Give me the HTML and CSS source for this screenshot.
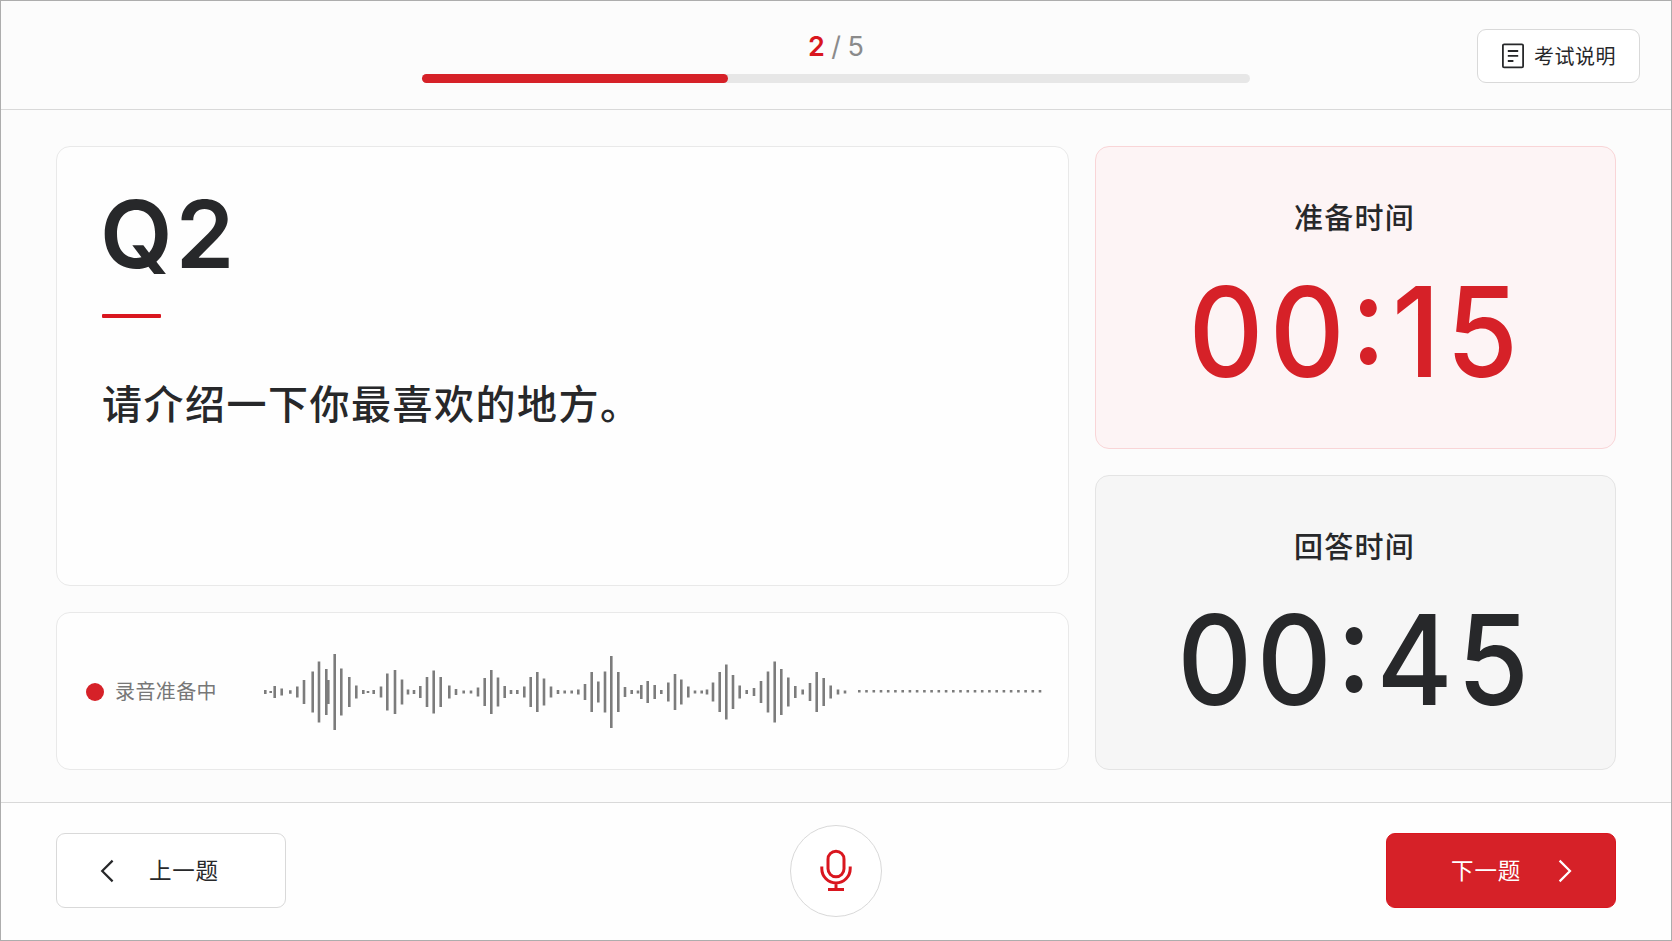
FILE: index.html
```html
<!doctype html>
<html lang="zh-CN">
  <head>
    <meta charset="utf-8">
    <title>口语考试</title>
    <link rel="stylesheet" href="styles.css">
  </head>
  <body>
    <div class="exam">
      <header class="topbar">
        <div class="progress">
          <div class="progress-count"><b>2</b> / 5</div>
          <div class="progress-track"><div class="progress-fill"></div></div>
        </div>
        <button class="btn btn-help" type="button">
          <svg width="24" height="26" viewBox="0 0 24 26" fill="none" stroke="currentColor" stroke-width="1.8">
            <rect x="1.9" y="1.4" width="20.2" height="23" rx="1.2"/>
            <path d="M6.8 8h10.4M6.8 12.9h10.4M6.8 18h5.6"/>
          </svg>
          <span>考试说明</span>
        </button>
      </header>

      <main class="content">
        <div class="column">
          <section class="card question">
            <h1>Q2</h1>
            <div class="rule"></div>
            <p>请介绍一下你最喜欢的地方。</p>
          </section>
          <section class="card recorder">
            <span class="rec-dot"></span>
            <span class="rec-label">录音准备中</span>
            <svg id="wave" class="wave" width="790" height="84" viewBox="260 -42 790 84"></svg>
          </section>
        </div>

        <div class="column">
          <section class="card timer timer-prep">
            <h2>准备时间</h2>
            <div class="clock">00:15</div>
          </section>
          <section class="card timer timer-answer">
            <h2>回答时间</h2>
            <div class="clock">00:45</div>
          </section>
        </div>
      </main>

      <footer class="bottombar">
        <button class="btn btn-nav btn-prev" type="button">
          <svg width="14" height="24" viewBox="0 0 14 24" fill="none" stroke="currentColor" stroke-width="2.2">
            <path d="M12.6 1.6 2.2 12l10.4 10.4"/>
          </svg>
          <span>上一题</span>
        </button>
        <button class="mic" type="button" aria-label="录音">
          <svg width="34" height="44" viewBox="0 0 34 44" fill="none" stroke="currentColor" stroke-width="3">
            <rect x="9" y="2.2" width="16" height="25.6" rx="8"/>
            <path d="M2.8 17.5v2.2a14.2 14.2 0 0 0 28.4 0v-2.2M17 34v6M9 40.5h16"/>
          </svg>
        </button>
        <button class="btn btn-nav btn-next" type="button">
          <span>下一题</span>
          <svg width="14" height="24" viewBox="0 0 14 24" fill="none" stroke="currentColor" stroke-width="2.2">
            <path d="M1.6 1.6 12 12 1.6 22.4"/>
          </svg>
        </button>
      </footer>
    </div>
    <script src="wave.js"></script>
  </body>
</html>
```
FILE: styles.css
```css
* {
  box-sizing: border-box;
}

body {
  margin: 0;
  font-family: Inter, "Noto Sans CJK SC", sans-serif;
  color: #27282a;
}

h1, h2, p {
  margin: 0;
}

.exam {
  display: flex;
  flex-direction: column;
  width: 1672px;
  height: 941px;
  border: 1px solid #adadad;
  background: #fcfcfc;
}

/* top bar */
.topbar {
  display: grid;
  grid-template-columns: 1fr 828px 1fr;
  height: 109px;
  padding: 0 31px;
  border-bottom: 1px solid #d9d9d9;
}

.progress {
  grid-column: 2;
  padding-top: 28px;
}

.progress-count {
  height: 36px;
  line-height: 36px;
  font-size: 27px;
  letter-spacing: 0.2px;
  word-spacing: -1.5px;
  text-align: center;
  color: #8b8b8b;
}

.progress-count b {
  font-weight: 600;
  color: #d9161f;
}

.progress-track {
  height: 9px;
  margin-top: 9px;
  border-radius: 5px;
  background: #e7e7e7;
}

.progress-fill {
  width: 37%;
  height: 100%;
  border-radius: 5px;
  background: #d62128;
}

.btn {
  display: flex;
  align-items: center;
  border: 1px solid #d9d9d9;
  border-radius: 9px;
  background: #fff;
  color: #27282a;
  font-family: inherit;
}

.btn-help {
  justify-self: end;
  gap: 9px;
  width: 163px;
  height: 54px;
  margin-top: 28px;
  padding: 0 0 1px 23px;
  font-size: 20px;
  letter-spacing: 0.5px;
}

/* cards */
.content {
  display: grid;
  grid-template-columns: 1013px 521px;
  column-gap: 26px;
  height: 692px;
  padding: 36px 55px 32px;
}

.column {
  display: flex;
  flex-direction: column;
  gap: 26px;
}

.card {
  border: 1px solid #e9e9e9;
  border-radius: 14px;
  background: #fefefe;
}

.question {
  height: 440px;
  padding: 32px 45px;
}

.question h1 {
  height: 110px;
  margin-left: -2px;
  line-height: 110px;
  font-size: 94px;
  font-weight: 600;
  letter-spacing: 3px;
}

.question .rule {
  width: 59px;
  height: 4px;
  margin-top: 25px;
  border-radius: 1px;
  background: #d9161f;
}

.question p {
  margin-top: 57px;
  line-height: 60px;
  font-size: 40px;
  font-weight: 500;
  letter-spacing: 1.5px;
}

.recorder {
  display: flex;
  align-items: center;
  flex: 1;
  padding: 1px 0 0 29px;
}

.rec-dot {
  width: 18px;
  height: 18px;
  border-radius: 50%;
  background: #d62128;
}

.rec-label {
  width: 145px;
  margin-left: 11px;
  padding-bottom: 2px;
  font-size: 20px;
  letter-spacing: 0.4px;
  color: #777;
}

.wave {
  stroke: #7c7c7c;
  stroke-width: 2.6;
}

.timer {
  padding-top: 50px;
  text-align: center;
}

.timer h2 {
  padding-right: 2px;
  line-height: 44px;
  font-size: 29px;
  font-weight: 500;
  letter-spacing: 1.3px;
}

/* slightly condensed digits, "case" lifts the colon to mid-height */
.clock {
  margin-top: 16px;
  line-height: 150px;
  font-size: 125px;
  font-weight: 500;
  letter-spacing: 5px;
  font-feature-settings: "case";
  transform: scaleX(0.93);
}

.timer-prep {
  height: 303px;
  border-color: #f9d5d7;
  background: #fdf4f5;
}

.timer-prep .clock {
  padding-left: 2px;
  letter-spacing: 6.5px;
  color: #d62128;
}

.timer-answer {
  flex: 1;
  border-color: #e4e4e4;
  background: #f6f6f6;
}

.timer-answer .clock {
  margin-top: 15px;
}

/* bottom bar */
.bottombar {
  display: flex;
  align-items: center;
  justify-content: space-between;
  flex: 1;
  padding: 0 55px 2px;
  border-top: 1px solid #d9d9d9;
  background: #fefefe;
}

.btn-nav {
  width: 230px;
  height: 75px;
  font-size: 22.5px;
  letter-spacing: 0.8px;
}

.btn-nav span {
  padding-bottom: 3px;
}

.btn-prev {
  gap: 35px;
  padding: 0 0 0 43px;
}

.btn-next {
  justify-content: flex-end;
  gap: 37px;
  padding: 0 43px 0 0;
  border-color: #d9161f;
  background: #d62128;
  color: #fff;
}

.mic {
  display: flex;
  align-items: center;
  justify-content: center;
  width: 92px;
  height: 92px;
  padding: 0;
  border: 1px solid #d9d9d9;
  border-radius: 50%;
  background: #fff;
  color: #d9161f;
}
```
FILE: wave.js
```js
// [x, height] of every bar, centred on y = 0
const bars = [
  [265.3, 4], [270.7, 2], [274.7, 12], [281.7, 7], [290.3, 3.5], [297.3, 11], [304, 24],
  [312.7, 41], [319, 61], [326.3, 46], [328.3, 24], [334.7, 76], [341.3, 47], [349.3, 30],
  [356.3, 13], [363.3, 4], [368, 2], [373.7, 4], [381, 11], [387.3, 37], [395, 44],
  [402, 25], [408, 5], [414, 4], [420.3, 12], [427, 30], [433.7, 43], [440.7, 30],
  [449.3, 13], [456, 6], [463.7, 3], [471, 3], [478, 9], [484.7, 28], [491.3, 44],
  [498, 29], [504.7, 12], [511, 4], [517.3, 4], [524.3, 11], [530.7, 30], [537.3, 40],
  [544, 27], [551, 11], [558, 4], [564.7, 3], [571.7, 3], [578.3, 5], [585, 16],
  [591.7, 40], [598.3, 21], [605, 41], [611.3, 72], [618.3, 40], [625, 10], [631.7, 4],
  [638, 3], [641.3, 14], [647.7, 22], [654.7, 14], [661.3, 4], [668.3, 19], [675, 36],
  [681.3, 25], [688.3, 11], [695, 3], [701.7, 3], [707, 5], [713, 19], [719.7, 40],
  [726.3, 55], [733, 34], [739.7, 13], [746.7, 4], [754, 8], [761, 22], [768, 41],
  [774.7, 61], [781.3, 46], [788.3, 29], [795.3, 12], [802.7, 5], [810, 18], [816.7, 40],
  [823.7, 28], [830.7, 13], [838, 5], [845, 3]
];

let d = bars.map(([x, h]) => `M${x} ${-h / 2}v${h}`).join("");

// flat part that has not been recorded yet
for (let i = 0; i < 26; i++) {
  d += `M${(859.3 + i * 7.23).toFixed(1)} -2v2.6`;
}

const path = document.createElementNS("http://www.w3.org/2000/svg", "path");
path.setAttribute("d", d);
document.getElementById("wave").appendChild(path);
```
